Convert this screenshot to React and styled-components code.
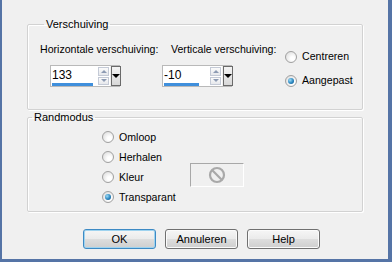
import React from "react";
import styled, { createGlobalStyle } from "styled-components";

const GlobalStyle = createGlobalStyle`
  html, body {
    margin: 0;
    padding: 0;
    background: #f0f0f0;
  }
  body {
    font-family: "Liberation Sans", Arial, sans-serif;
    font-size: 11px;
    color: #000;
  }
`;

const Frame = styled.div`
  box-sizing: border-box;
  width: 392px;
  height: 262px;
  background: #f0f0f0;
  border-left: 2px solid #5574a6;
  border-right: 4px solid #5574a6;
  border-bottom: 3px solid #5574a6;
  padding: 18px 0 0 25px;
  display: flex;
  flex-direction: column;
`;

const Group = styled.fieldset`
  box-sizing: border-box;
  width: 336px;
  margin: ${(p) => p.$top || 0}px 0 0 0;
  padding: ${(p) => p.$pad};
  border: 1px solid #d2d2d2;
  border-radius: 2px;
  box-shadow: inset 1px 1px 0 #fff, 1px 1px 0 #fff;
  min-inline-size: 0;
`;

const Legend = styled.legend`
  margin-left: 4px;
  padding: 0 2px;
  line-height: 13px;
`;

const ShiftRow = styled.div`
  display: flex;
  align-items: flex-start;
`;

const Column = styled.div`
  display: flex;
  flex-direction: column;
  width: ${(p) => p.$width}px;
`;

const FieldLabel = styled.div`
  line-height: 13px;
  margin-left: ${(p) => p.$indent || 0}px;
  white-space: nowrap;
  font-size: 10.6px;
`;

const Combo = styled.div`
  display: flex;
  align-items: stretch;
  height: 22px;
  width: 70px;
  margin-top: 9px;
  margin-left: ${(p) => p.$indent || 0}px;
  border: 1px solid #b9b9b9;
  box-sizing: border-box;
`;

const Field = styled.div`
  position: relative;
  flex: 0 0 45px;
  background: #fff;
  font-size: 12px;
  line-height: 18px;
  padding-left: 1px;
`;

const FieldBar = styled.div`
  position: absolute;
  left: 1px;
  bottom: 0;
  height: 3px;
  background: #3f8fdc;
`;

const Spinner = styled.div`
  display: flex;
  flex-direction: column;
  flex: 0 0 11px;
  padding: 1px;
  gap: 1px;
  background: #fff;
`;

const SpinButton = styled.div`
  flex: 1;
  border: 1px solid #c4cad6;
  background: linear-gradient(#fbfbfb, #e6e8ec);
  display: flex;
  align-items: center;
  justify-content: center;
  &::after {
    content: "";
    border-left: 3px solid transparent;
    border-right: 3px solid transparent;
    ${(p) => (p.$up ? "border-bottom" : "border-top")}: 3px solid #8d9bb3;
  }
`;

const DropButton = styled.div`
  flex: 1;
  margin-left: 1px;
  border: 1px solid #6a6a6a;
  background: linear-gradient(#f4f4f4, #d8d8d8);
  display: flex;
  align-items: center;
  justify-content: center;
  &::after {
    content: "";
    border-left: 4px solid transparent;
    border-right: 4px solid transparent;
    border-top: 4px solid #000;
  }
`;

const RadioStack = styled.div`
  display: flex;
  flex-direction: column;
  gap: ${(p) => p.$gap}px;
  margin-top: ${(p) => p.$top || 0}px;
`;

const RadioRow = styled.label`
  display: flex;
  align-items: center;
  gap: 5px;
  height: ${(p) => p.$h}px;
  line-height: 13px;
  white-space: nowrap;
  font-size: 10.6px;
`;

const RadioDot = styled.span`
  box-sizing: border-box;
  width: 12px;
  height: 12px;
  border-radius: 50%;
  border: 1px solid #a0a0a0;
  background: radial-gradient(circle at 65% 65%, #ffffff 20%, #d6d6d6 100%);
  display: flex;
  align-items: center;
  justify-content: center;
  &::after {
    content: "";
    display: ${(p) => (p.$on ? "block" : "none")};
    width: 6px;
    height: 6px;
    border-radius: 50%;
    background: radial-gradient(circle at 35% 35%, #9fdcf5 0%, #2a86c0 55%, #0f4e7e 100%);
  }
`;

const ModeGrid = styled.div`
  display: grid;
  grid-template-columns: 88px 54px;
  grid-auto-rows: 20px;
  padding-left: 74px;
`;

const ColorSwatch = styled.div`
  grid-column: 2;
  grid-row: 2 / span 2;
  align-self: center;
  margin-top: 16px;
  box-sizing: border-box;
  width: 54px;
  height: 24px;
  border: 1px solid;
  border-color: #a8a8a8 #fff #fff #a8a8a8;
  display: flex;
  align-items: center;
  justify-content: center;
`;

const ButtonRow = styled.div`
  display: flex;
  gap: 9px;
  margin-top: 17px;
  padding-left: 56px;
`;

const Button = styled.button`
  box-sizing: border-box;
  width: 73px;
  height: 20px;
  padding: 0;
  font-family: "Liberation Sans", Arial, sans-serif;
  font-size: 11px;
  color: #000;
  border-radius: 3px;
  border: 1px solid ${(p) => (p.$focus ? "#3d8ac4" : "#707070")};
  box-shadow: ${(p) =>
    p.$focus ? "inset 0 0 0 1px #9fd3ef" : "inset 0 0 0 1px #fbfbfb"};
  background: linear-gradient(#f6f6f6 0%, #ebebeb 48%, #dddddd 52%, #cfcfcf 100%);
`;

const Radio = ({ on, label, h }) => (
  <RadioRow $h={h}>
    <RadioDot $on={on} />
    {label}
  </RadioRow>
);

const SpinField = ({ value, bar, indent }) => (
  <Combo $indent={indent}>
    <Field>
      {value}
      <FieldBar style={{ width: bar }} />
    </Field>
    <Spinner>
      <SpinButton $up />
      <SpinButton />
    </Spinner>
    <DropButton />
  </Combo>
);

const NoIcon = () => (
  <svg width="18" height="18" viewBox="0 0 18 18">
    <circle cx="9" cy="9" r="7" fill="none" stroke="#a9a9a9" strokeWidth="2.2" />
    <line x1="4.3" y1="4.3" x2="13.7" y2="13.7" stroke="#a9a9a9" strokeWidth="2.2" />
  </svg>
);

export default function App() {
  return (
    <>
      <GlobalStyle />
      <Frame>
        <Group $pad="12px 0 22px 12px">
          <Legend>Verschuiving</Legend>
          <ShiftRow>
            <Column $width={122}>
              <FieldLabel>Horizontale verschuiving:</FieldLabel>
              <SpinField value="133" bar={41} indent={10} />
            </Column>
            <Column $width={123}>
              <FieldLabel $indent={9}>Verticale verschuiving:</FieldLabel>
              <SpinField value="-10" bar={35} />
            </Column>
            <RadioStack $gap={11} $top={7}>
              <Radio label="Centreren" h={13} />
              <Radio on label="Aangepast" h={13} />
            </RadioStack>
          </ShiftRow>
        </Group>
        <Group $top={1} $pad="3px 0 4px 0">
          <Legend>Randmodus</Legend>
          <ModeGrid>
            <Radio label="Omloop" h={20} />
            <div />
            <Radio label="Herhalen" h={20} />
            <ColorSwatch>
              <NoIcon />
            </ColorSwatch>
            <Radio label="Kleur" h={20} />
            <Radio on label="Transparant" h={20} />
          </ModeGrid>
        </Group>
        <ButtonRow>
          <Button $focus>OK</Button>
          <Button>Annuleren</Button>
          <Button>Help</Button>
        </ButtonRow>
      </Frame>
    </>
  );
}
